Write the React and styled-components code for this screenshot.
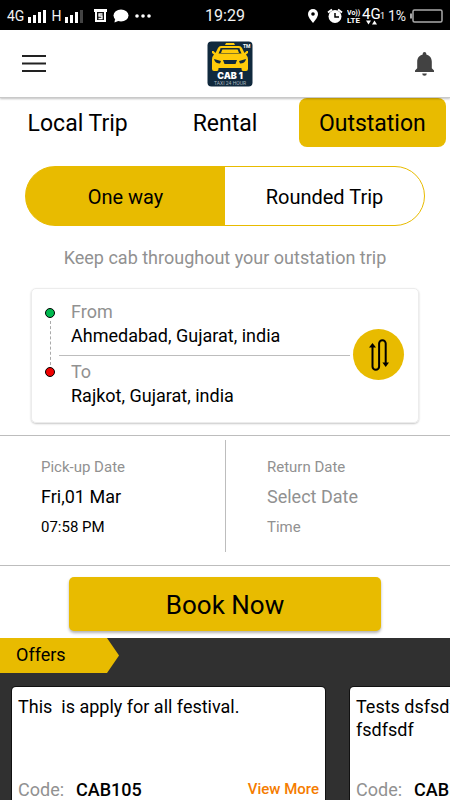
import React, { useState } from "react";
import styled, { createGlobalStyle } from "styled-components";

const yellow = "#e8bb00";
const grey = "#919191";
const line = "#bdbdbd";

const GlobalStyle = createGlobalStyle`
  *, *::before, *::after { box-sizing: border-box; }
  body { margin: 0; background: #fff; color: #000; font-family: Roboto, "Noto Sans", sans-serif; }
  button, input { font: inherit; color: inherit; }
  button { cursor: pointer; }
`;

const Screen = styled.div`
  display: flex;
  flex-direction: column;
  height: 100vh;
  overflow: hidden;
`;

const StatusBar = styled.div`
  display: grid;
  grid-template-columns: 1fr auto 1fr;
  align-items: center;
  flex: none;
  height: 30px;
  padding: 2px 7px 0;
  background: #000;
  color: #f2f2f2;
  font-size: 14px;
  line-height: 20px;
`;

const StatusGroup = styled.div`
  display: flex;
  align-items: center;
  justify-content: ${(p) => (p.$end ? "flex-end" : "flex-start")};
  gap: 4px;
`;

const Notices = styled.div`
  display: flex;
  padding-left: 6px;
`;

const Clock = styled.time`
  font-size: 16px;
`;

const Header = styled.header`
  display: flex;
  align-items: center;
  justify-content: space-between;
  flex: none;
  height: 68px;
  padding: 0 15px 0 22px;
  border-bottom: 1px solid #c9c9c9;
  box-shadow: 0 1px 2px rgba(0, 0, 0, 0.25);
  position: relative;
`;

const IconButton = styled.button`
  display: flex;
  padding: 0;
  border: 0;
  background: none;
`;

const Tabs = styled.nav`
  display: grid;
  grid-template-columns: repeat(3, 1fr);
  flex: none;
  padding: 0 4px;
`;

const Tab = styled.button`
  height: 49px;
  padding: 2px 0 0;
  border: 0;
  border-radius: 8px;
  background: ${(p) => (p.$active ? yellow : "transparent")};
  font-size: 23px;
`;

const Segments = styled.div`
  display: grid;
  grid-template-columns: 1fr 1fr;
  flex: none;
  height: 60px;
  margin: 19px 25px 0;
  border: 1px solid ${yellow};
  border-radius: 30px;
  background: linear-gradient(90deg, ${(p) => (p.$first ? `${yellow} 50%, #fff 50%` : `#fff 50%, ${yellow} 50%`)});
  overflow: hidden;
`;

const Segment = styled.button`
  padding: 2px 0 0;
  border: 0;
  background: none;
  font-size: 20px;
`;

const Hint = styled.p`
  flex: none;
  margin: 20px 0 18px;
  color: ${grey};
  font-size: 18px;
  line-height: 24px;
  text-align: center;
`;

const RouteCard = styled.section`
  display: grid;
  grid-template-columns: 12px 1fr 51px;
  column-gap: 3px;
  align-items: center;
  flex: none;
  height: 135px;
  margin: 0 31px 12px;
  padding: 0 14px 2px 12px;
  border: 1px solid #ececec;
  border-radius: 5px;
  box-shadow: 0 1px 2px rgba(0, 0, 0, 0.22);
`;

const Stops = styled.div`
  display: flex;
  flex-direction: column;
  align-items: center;
  align-self: start;
  justify-content: space-between;
  height: 69px;
  margin-top: 19px;
`;

const Dot = styled.span`
  width: 10px;
  height: 10px;
  border: 1px solid #000;
  border-radius: 50%;
  background: ${(p) => p.$color};
`;

const Dashes = styled.span`
  height: 44px;
  border-left: 1px dashed #aaa;
`;

const Places = styled.div`
  display: flex;
  flex-direction: column;
`;

const Place = styled.label`
  display: flex;
  flex-direction: column;
  height: 59px;
  padding: 4px 0 0 12px;
  color: ${grey};
  font-size: 18px;
  line-height: 24px;

  & + & {
    border-top: 1px solid ${line};
  }
`;

const PlaceInput = styled.input`
  width: 100%;
  height: 24px;
  padding: 0;
  border: 0;
  outline: 0;
  background: none;
  color: #000;
`;

const SwapButton = styled.button`
  display: flex;
  align-items: center;
  justify-content: center;
  width: 51px;
  height: 51px;
  padding: 0;
  border: 0;
  border-radius: 50%;
  background: ${yellow};
`;

const Dates = styled.section`
  display: grid;
  grid-template-columns: 1fr 1fr;
  flex: none;
  height: 131px;
  padding: 4px 0 13px;
  border-top: 1px solid ${line};
  border-bottom: 1px solid ${line};
`;

const DateButton = styled.button`
  display: flex;
  flex-direction: column;
  padding: 16px 0 0 41px;
  border: 0;
  background: none;
  color: ${(p) => (p.$empty ? grey : "#000")};
  font-size: 15px;
  line-height: 22px;
  text-align: left;

  & + & {
    border-left: 1px solid ${line};
  }
`;

const DateLabel = styled.span`
  color: ${grey};
`;

const DateValue = styled.span`
  padding: 4px 0;
  font-size: 18px;
  line-height: 30px;
`;

const BookButton = styled.button`
  align-self: center;
  flex: none;
  width: calc(100% - 138px);
  height: 54px;
  margin: 11px 0 7px;
  padding: 2px 0 0;
  border: 0;
  border-radius: 5px;
  background: ${yellow};
  box-shadow: 0 2px 3px rgba(0, 0, 0, 0.3);
  font-size: 26px;
`;

const Offers = styled.section`
  flex: 1;
  min-height: 0;
  background: #303030;
  overflow: hidden;
`;

const OffersTitle = styled.h2`
  width: 119px;
  height: 35px;
  margin: 0 0 14px;
  padding-left: 16px;
  background: ${yellow};
  clip-path: polygon(0 0, 107px 0, 100% 50%, 107px 100%, 0 100%);
  font-size: 18px;
  font-weight: 400;
  line-height: 33px;
`;

const OfferList = styled.div`
  display: flex;
  gap: 25px;
  padding-left: 12px;
`;

const OfferCard = styled.article`
  display: flex;
  flex-direction: column;
  justify-content: space-between;
  flex: none;
  width: 313px;
  height: 122px;
  padding: 8px 6px;
  border-radius: 4px;
  background: #fff;
  box-shadow: 0 0 0 1px #111;
  font-size: 18px;
  line-height: 23px;
`;

const OfferText = styled.p`
  margin: 0;
  white-space: pre-wrap;
`;

const OfferFooter = styled.div`
  display: flex;
  align-items: center;
  gap: 12px;
`;

const CodeLabel = styled.span`
  color: ${grey};
`;

const Code = styled.strong`
  font-weight: 500;
`;

const MoreLink = styled.a`
  margin-left: auto;
  color: #f57c00;
  font-size: 15px;
  font-weight: 500;
  text-decoration: none;
`;

const Signal = ({ weak }) => (
  <svg width="19" height="15" viewBox="0 0 19 15" fill="#fff" aria-hidden="true">
    <rect x="0" y="8" width="3" height="6" />
    <rect x="5" y="6" width="3" height="8" />
    <rect x="10" y="3" width="3" height="11" />
    <rect x="15" y="1" width="3" height="13" fill={weak ? "#444" : "#fff"} />
  </svg>
);

const LeftStatusIcons = () => (
  <svg width="58" height="16" viewBox="0 0 58 16" aria-hidden="true">
    <path d="M0 1h13v3h-1v10H1V4H0z" fill="#fff" />
    <path d="M3 4h7v8H3z" fill="#111" />
    <path d="M8.500 6H5v2h3v2.500H4.500" fill="none" stroke="#fff" strokeWidth="1.300" />
    <ellipse cx="27" cy="7.500" rx="7.500" ry="6" fill="#fff" />
    <path d="M21 11l-.5 3.500 5-2z" fill="#fff" />
    <circle cx="43" cy="8" r="1.800" fill="#fff" />
    <circle cx="49" cy="8" r="1.800" fill="#fff" />
    <circle cx="55" cy="8" r="1.800" fill="#fff" />
  </svg>
);

const PinAlarm = () => (
  <svg width="35" height="16" viewBox="0 0 35 16" aria-hidden="true">
    <path d="M5 1a5 5 0 0 0-5 5c0 3.500 5 9 5 9s5-5.500 5-9a5 5 0 0 0-5-5z" fill="#fff" />
    <circle cx="5" cy="6" r="1.800" />
    <circle cx="27" cy="8.500" r="6.500" fill="#fff" />
    <path d="M27 5v4h4" fill="none" stroke="#000" strokeWidth="1.500" />
    <path d="M20 4.500l4-3M30 1.500l4 3" stroke="#fff" strokeWidth="2" />
  </svg>
);

const Network = () => (
  <svg width="37" height="22" viewBox="0 0 37 22" fill="#fff" fontFamily="Roboto" aria-hidden="true">
    <text x="0" y="10" fontSize="7" fontWeight="700">Vo))</text>
    <text x="0" y="18" fontSize="8" fontWeight="700">LTE</text>
    <text x="15" y="14" fontSize="15">4G</text>
    <text x="33" y="14" fontSize="9">1</text>
    <path d="M19 15.500h5l-2.500 4zM25 19.500h5l-2.500-4z" />
  </svg>
);

const Battery = () => (
  <svg width="33" height="14" viewBox="0 0 33 14" fill="none" stroke="#aaa" strokeWidth="1.500" aria-hidden="true">
    <rect x="3" y="1" width="29" height="12" rx="1.500" />
    <path d="M1 4.500v5" strokeWidth="2" />
  </svg>
);

const MenuIcon = () => (
  <svg width="24" height="19" viewBox="0 0 24 19" stroke="#222" strokeWidth="2" aria-hidden="true">
    <path d="M0 2h24M0 9.500h24M0 17h24" />
  </svg>
);

const BellIcon = () => (
  <svg width="21" height="24" viewBox="0 0 21 24" fill="#424242" aria-hidden="true">
    <path d="M10.500 0a1.800 1.800 0 0 0-1.800 1.800v.7C5.300 3.400 3.200 6.100 3.200 9.800v6.400L1 18.600V20h19v-1.400l-2.200-2.400V9.800c0-3.700-2.100-6.400-5.500-7.300v-.7A1.800 1.800 0 0 0 10.500 0z" />
    <path d="M8.200 21.500h4.600a2.300 2.300 0 0 1-4.600 0z" />
  </svg>
);

const Logo = () => (
  <svg width="46" height="46" viewBox="0 0 46 46" role="img" aria-label="Cab 1, taxi 24 hour">
    <rect x=".5" y=".5" width="45" height="45" rx="4" fill="#10293d" />
    <path d="M18 4l1-2h8l1 2z" fill="#ffcb0a" />
    <path d="M14 5h18q2 0 3 2l2.500 5 2-2h1.500v2l-2 1.500q2 2 2 5V28q0 2-2 2h-3q-1.500 0-1.500-2v-1h-23v1q0 2-1.500 2H7q-2 0-2-2v-9.500q0-3 2-5L5 12v-2h1.500l2 2L11 7q1-2 3-2z" fill="#ffcb0a" />
    <path d="M15 7h16q1 0 1.500 1l2 4.500h-23l2-4.500q.5-1 1.500-1zM7 18l7 2-1 2.500q-5 0-6-4.500zM39 18l-7 2 1 2.500q5 0 6-4.500zM16 19h14l-1.500 4h-11z" fill="#10293d" />
    <path d="M15.500 8h15l1.500 4H14z" fill="#ffcb0a" />
    <path d="M13 8h20" fill="none" stroke="#10293d" />
    <text x="36" y="7" fill="#fff" fontFamily="Roboto" fontSize="5" fontWeight="700">TM</text>
    <text x="23" y="38" fill="#fff" fontFamily="Inter, Roboto" fontSize="9" fontWeight="900" textAnchor="middle">CAB 1</text>
    <text x="23" y="43.500" fill="#a9b4bc" fontFamily="Roboto" fontSize="5" textAnchor="middle">TAXI 24 HOUR</text>
  </svg>
);

const SwapIcon = () => (
  <svg width="20" height="32" viewBox="0 0 20 32" fill="none" stroke="#000" strokeWidth="2" aria-hidden="true">
    <path d="M3.500 6v21.500a3.300 3.300 0 0 0 6.600 0V4.500a3.300 3.300 0 0 1 6.600 0V26" />
    <path d="M3.500 4L0 8.500h7zM16.700 28l-3.300-4.500H20z" fill="#000" stroke="none" />
  </svg>
);

const tabs = ["Local Trip", "Rental", "Outstation"];
const ways = ["One way", "Rounded Trip"];
const offers = [
  { text: "This  is apply for all festival.", code: "CAB105" },
  { text: "Tests dsfsdf\nfsdfsdf", code: "CABI" },
];

export default function App() {
  const [tab, setTab] = useState("Outstation");
  const [way, setWay] = useState("One way");
  const [from, setFrom] = useState("Ahmedabad, Gujarat, india");
  const [to, setTo] = useState("Rajkot, Gujarat, india");

  const swap = () => {
    setFrom(to);
    setTo(from);
  };

  return (
    <Screen>
      <GlobalStyle />
      <StatusBar>
        <StatusGroup>
          <span>4G</span>
          <Signal />
          <span>H</span>
          <Signal weak />
          <Notices><LeftStatusIcons /></Notices>
        </StatusGroup>
        <Clock>19:29</Clock>
        <StatusGroup $end>
          <PinAlarm />
          <Network />
          <span>1%</span>
          <Battery />
        </StatusGroup>
      </StatusBar>

      <Header>
        <IconButton aria-label="Menu"><MenuIcon /></IconButton>
        <Logo />
        <IconButton aria-label="Notifications"><BellIcon /></IconButton>
      </Header>

      <Tabs>
        {tabs.map((name) => (
          <Tab key={name} $active={name === tab} onClick={() => setTab(name)}>{name}</Tab>
        ))}
      </Tabs>

      <Segments $first={way === ways[0]}>
        {ways.map((name) => (
          <Segment key={name} aria-pressed={name === way} onClick={() => setWay(name)}>
            {name}
          </Segment>
        ))}
      </Segments>

      <Hint>Keep cab throughout your outstation trip</Hint>

      <RouteCard>
        <Stops>
          <Dot $color="#00b94f" />
          <Dashes />
          <Dot $color="#f00000" />
        </Stops>
        <Places>
          <Place>
            From
            <PlaceInput value={from} onChange={(e) => setFrom(e.target.value)} />
          </Place>
          <Place>
            To
            <PlaceInput value={to} onChange={(e) => setTo(e.target.value)} />
          </Place>
        </Places>
        <SwapButton aria-label="Swap places" onClick={swap}><SwapIcon /></SwapButton>
      </RouteCard>

      <Dates>
        <DateButton>
          <DateLabel>Pick-up Date</DateLabel>
          <DateValue>Fri,01 Mar</DateValue>
          <span>07:58 PM</span>
        </DateButton>
        <DateButton $empty>
          <DateLabel>Return Date</DateLabel>
          <DateValue>Select Date</DateValue>
          <span>Time</span>
        </DateButton>
      </Dates>

      <BookButton>Book Now</BookButton>

      <Offers>
        <OffersTitle>Offers</OffersTitle>
        <OfferList>
          {offers.map((offer) => (
            <OfferCard key={offer.code}>
              <OfferText>{offer.text}</OfferText>
              <OfferFooter>
                <CodeLabel>Code:</CodeLabel>
                <Code>{offer.code}</Code>
                <MoreLink href="#offers">View More</MoreLink>
              </OfferFooter>
            </OfferCard>
          ))}
        </OfferList>
      </Offers>
    </Screen>
  );
}
